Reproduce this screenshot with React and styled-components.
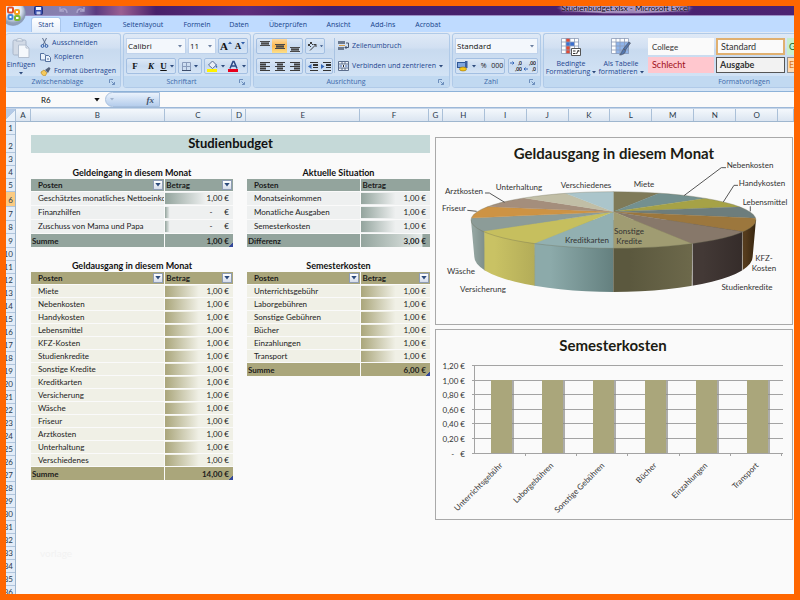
import React from 'react';
import styled, { createGlobalStyle } from 'styled-components';

const GlobalStyle = createGlobalStyle`
* { box-sizing: border-box; }
body {
  margin: 0;
  background: #ff6600;
  font-family: Lato, "Liberation Sans", sans-serif;
  font-size: 8px;
  color: #222;
}
button, input, select {
  font: inherit;
  color: inherit;
  margin: 0;
  padding: 0;
  border: 0;
  background: none;
  min-width: 0;
}
svg { display: block; flex: none; }
`;

const Frame = styled.div`
  height: 100vh;
  border: 6px solid #ff6600;
  background: #fafafa;
  overflow: hidden;
  position: relative;
  display: flex;
  flex-direction: column;
`;

/* ---------- window bar and tabs ---------- */

const TitleBar = styled.header`
  flex: none;
  height: 10px;
  padding-left: 28px;
  display: flex;
  align-items: center;
  overflow: hidden;
  border-bottom: 1px solid #9a8fc4;
  background: linear-gradient(90deg, #7e78a8 0, #8a82b0 70px, #5b3a80 90px, #9a5f92 115px, #47206a 150px, #5d2d7c 240px, #43206a 320px, #4c2372 100%);
`;
const QuickAccess = styled.div`
  display: flex;
  gap: 8px;
  flex: 1;
`;
const WindowTitle = styled.h1`
  margin: -4px 100px 0 0;
  padding: 0 5px;
  font: 8px/12px Lato, sans-serif;
  color: #0c0618;
  text-shadow: 0 0 2px #e6dcf0, 0 0 4px #cbbbe0;
  background: radial-gradient(closest-side, #a892be, #9a83b4 80%, transparent);
  align-self: flex-start;
  white-space: nowrap;
`;
const OfficeButton = styled.button`
  position: absolute;
  left: -6px;
  top: -6px;
  width: 26px;
  height: 26px;
  border-radius: 50%;
  clip-path: inset(6px 0 0 6px);
`;
const Tabs = styled.nav`
  flex: none;
  height: 16px;
  padding-left: 25px;
  display: flex;
  align-items: stretch;
  background: #bfdbff;
`;
const Tab = styled.button`
  width: ${p => p.$width}px;
  font: 7px/14px "Open Sans", sans-serif;
  color: #15428b;
  border-radius: 3px 3px 0 0;
  margin-top: 1px;
  background: ${p => (p.$active ? 'linear-gradient(#fff, #e6effa)' : 'none')};
  border: ${p => (p.$active ? '1px solid #a9c6ec' : '1px solid transparent')};
  border-bottom: 0;
`;

/* ---------- ribbon ---------- */

const Ribbon = styled.div`
  flex: none;
  height: 60px;
  display: flex;
  gap: 2px;
  padding: 1px 0 3px;
  overflow: hidden;
  font: 7px/10px "Open Sans", sans-serif;
  color: #1d4690;
  background: linear-gradient(#e2ebf7, #cfdff1 30%, #c7daf0 55%, #d5e5f6);
  border-bottom: 1px solid #8db2d8;
`;
const Group = styled.section`
  flex: ${p => (p.$width ? `0 0 ${p.$width}px` : '1 0 0')};
  min-width: 0;
  display: flex;
  flex-direction: column;
  border: 1px solid #b0cae8;
  border-left-width: ${p => (p.$first ? 0 : '1px')};
  border-right-width: ${p => (p.$last ? 0 : '1px')};
  border-radius: ${p => (p.$last ? '3px 0 0 3px' : '3px')};
  overflow: hidden;
  background: linear-gradient(#dfe9f6, #d2e0f2 25%, #c8daef 30%, #d6e6f7);
`;
const GroupBody = styled.div`
  flex: 1;
  display: flex;
  gap: ${p => p.$gap || 0}px;
  padding: 4px ${p => (p.$last ? 0 : 2)}px 0 2px;
`;
const GroupLabel = styled.h2`
  margin: 0;
  height: 11px;
  font: inherit;
  color: #3e6aaa;
  display: flex;
  align-items: center;
  padding-right: ${p => (p.$last ? 24 : 5)}px;
  background: #c1d9f1;
`;
const LabelText = styled.span`
  flex: 1;
  text-align: ${p => (p.$last ? 'right' : 'center')};
`;
const Rows = styled.div`
  display: flex;
  flex-direction: column;
  gap: 4px;
  flex: ${p => (p.$grow ? 1 : 'none')};
`;
const Row = styled.div`
  display: flex;
  gap: ${p => p.$gap || 2}px;
  height: 16px;
  align-items: stretch;
`;
const ButtonBox = styled.div`
  display: flex;
  border: 1px solid #a3bfe2;
  border-radius: 2px;
  background: linear-gradient(#dce8f6, #c9dbf0 50%, #d5e4f5);
  flex: ${p => (p.$grow ? 1 : 'none')};
`;
const IconButton = styled.button`
  flex: ${p => (p.$width ? `0 0 ${p.$width}px` : 1)};
  display: flex;
  align-items: center;
  justify-content: center;
  gap: ${p => (p.$tight ? 0 : 3)}px;
  color: #222;
  background: ${p => (p.$active ? 'linear-gradient(#fdd9a0, #fbb850 50%, #fde08a)' : 'none')};
`;
const Glyph = styled.span`
  font: ${p => (p.$italic ? 'italic ' : '')}bold ${p => p.$size || 9}px/12px "Liberation Serif", serif;
  text-decoration: ${p => (p.$underline ? 'underline' : 'none')};
  color: ${p => p.$color || '#111'};
`;
const ComboBox = styled.span`
  position: relative;
  flex: ${p => (p.$width ? `0 0 ${p.$width}px` : 1)};
  display: flex;
  background: #f3f7fc;
  border: 1px solid #c0d3ec;
  color: #111;
`;
const ComboSelect = styled.select`
  appearance: none;
  flex: 1;
  width: 100%;
  padding-left: 1px;
  font-size: 8px;
`;
const ComboCaret = styled.span`
  position: absolute;
  right: 3px;
  top: 6px;
  pointer-events: none;
`;
const PasteButton = styled.button`
  width: 32px;
  display: flex;
  flex-direction: column;
  align-items: center;
  gap: 2px;
  margin-left: -3px;
`;
const CommandList = styled.div`
  display: flex;
  flex-direction: column;
  gap: 4px;
`;
const Command = styled.button`
  display: flex;
  align-items: center;
  gap: 3px;
  height: ${p => p.$height || 10}px;
  white-space: nowrap;
`;
const Divider = styled.span`
  width: 1px;
  margin: 0 3px 3px 1px;
  background: #a9c3e2;
`;
const BigButton = styled.button`
  flex: 0 0 50px;
  display: flex;
  flex-direction: column;
  align-items: center;
  justify-content: flex-start;
  line-height: 8px;
  gap: 4px;
  white-space: nowrap;
`;
const CaptionLine = styled.span`
  display: flex;
  align-items: center;
  justify-content: center;
  gap: 2px;
`;
const Gallery = styled.div`
  flex: 1;
  min-width: 0;
  display: grid;
  grid-template-columns: 66px 69px 67px;
  grid-template-rows: 17px 16px;
  gap: 2px;
  overflow: hidden;
  padding-left: 2px;
`;
const StyleChip = styled.button`
  text-align: left;
  padding-left: ${p => (p.$narrow ? 1 : 3)}px;
  font: ${p => (p.$bold ? 'bold ' : '')}9px/12px Lato, sans-serif;
  font-size: ${p => (p.$small ? 8 : 9)}px;
  color: ${p => p.$color || '#333'};
  background: ${p => p.$bg || '#fafafa'};
  border: ${p => p.$border || '1px solid transparent'};
`;

/* ---------- formula bar ---------- */

const FormulaBar = styled.div`
  flex: none;
  height: 16px;
  display: flex;
  background: #fafafa;
  border-bottom: 1px solid #9db8d8;
`;
const NameBox = styled.input`
  width: 88px;
  padding-left: 35px;
  font-size: 8px;
  color: #111;
`;
const FormulaTools = styled.div`
  width: 55px;
  margin-left: 11px;
  display: flex;
  align-items: center;
  justify-content: space-between;
  padding: 0 5px 0 4px;
  border: 1px solid #a8c0de;
  border-radius: 8px 0 0 8px;
  background: linear-gradient(#eaf2fc, #b5cdec);
  margin-right: -1px;
`;
const FormulaInput = styled.input`
  flex: 1;
  padding: 0 4px;
`;
const NameCaret = styled.span`
  align-self: center;
  width: 0;
`;

/* ---------- sheet ---------- */

const ColumnHeads = styled.div`
  flex: none;
  height: 14px;
  display: grid;
  grid-template-columns: 10px 15fr 134fr 68fr 14fr 114fr 69fr 14fr repeat(8, 42fr) 16fr;
  background: linear-gradient(#f4f8fc, #dbe5f1);
  border-top: 1px solid #c5d5e8;
  border-bottom: 1px solid #9eb6ce;
`;
const ColumnHead = styled.div`
  text-align: center;
  line-height: 12px;
  color: #2b3a4c;
  border-right: 1px solid #aac0d8;
  overflow: hidden;
  &:first-child {
    background: linear-gradient(135deg, #b4cae6 50%, #e9f1fa 50%);
  }
`;
const Sheet = styled.main`
  flex: 1;
  min-height: 0;
  display: flex;
`;
const RowHeads = styled.div`
  flex: 0 0 10px;
  min-width: 0;
  border-right: 1px solid #9eb6ce;
`;
const RowHead = styled.div`
  height: ${p => p.$height}px;
  display: flex;
  justify-content: flex-end;
  align-items: flex-end;
  padding-right: 2px;
  line-height: 12px;
  overflow: hidden;
  color: #2b3a4c;
  border-bottom: 1px solid #b0c5dc;
  background: ${p => (p.$active ? '#fbcb82' : '#e3ecf7')};
`;
const Area = styled.div`
  flex: 1;
  min-width: 0;
  display: grid;
  grid-template-columns: 15fr 399fr 5fr 358fr 1fr;
  align-items: start;
`;
const Budget = styled.div`
  grid-column: 2;
  padding-top: 13px;
`;
const Banner = styled.h2`
  margin: 0 0 13px;
  height: 18px;
  text-align: center;
  font-size: 13px;
  line-height: 17px;
  color: #111;
  background: #c5d9d8;
`;
const Columns = styled.div`
  display: grid;
  grid-template-columns: 202fr 183fr;
  column-gap: 14px;
  row-gap: 12px;
  align-items: start;
`;
const Table = styled.table`
  width: 100%;
  table-layout: fixed;
  border-collapse: separate;
  border-spacing: 0;
`;
const Caption = styled.caption`
  font-size: 9px;
  font-weight: bold;
  line-height: 13px;
  color: #111;
`;
const HeadCell = styled.th`
  width: ${p => p.$width};
  height: 13px;
  padding: 0 0 0 ${p => p.$indent}px;
  line-height: 12px;
  text-align: left;
  color: #1c1c1c;
  background: ${p => p.$accent};
  border-bottom: 1px solid #fafafa;
  border-left: ${p => (p.$indent < 5 ? '1px solid #fafafa' : 0)};
`;
const HeadInner = styled.span`
  display: flex;
  justify-content: space-between;
  align-items: center;
  height: 12px;
`;
const Filter = styled.button`
  width: 10px;
  height: 10px;
  margin-right: 1px;
  display: flex;
  align-items: center;
  justify-content: center;
  border: 1px solid #8f9db5;
  background: linear-gradient(#fff, #d5dcea);
`;
const NameCell = styled.td`
  height: ${p => p.$height}px;
  padding: 0 0 0 7px;
  line-height: 11px;
  overflow: hidden;
  white-space: nowrap;
  background: ${p => p.$bg};
  border-bottom: 1px solid #fafafa;
`;
const AmountCell = styled.td`
  padding: 0;
  line-height: 11px;
  background: ${p => p.$bg};
  border-bottom: 1px solid #fafafa;
  border-left: 1px solid #fafafa;
`;
const Amount = styled.span`
  display: flex;
  justify-content: flex-end;
  gap: 12px;
  padding-right: 4px;
  background: linear-gradient(90deg, ${p => p.$accent}, ${p => p.$bg}) no-repeat 0 0 / ${p => p.$fill}% 100%;
`;
const TotalCell = styled.td`
  height: 13px;
  padding: 0 ${p => (p.$right ? 4 : 0)}px 0 1px;
  line-height: 12px;
  font-weight: bold;
  text-align: ${p => (p.$right ? 'right' : 'left')};
  color: #1c1c1c;
  background: ${p => (p.$fade ? `linear-gradient(90deg, ${p.$accent}, #e4e9e7 88%, ${p.$accent} 90%)` : p.$accent)};
  border-left: ${p => (p.$right ? '1px solid #fafafa' : 0)};
`;
/* total with the resize handle of the table in its corner */
const CornerCell = styled(TotalCell)`
  background: linear-gradient(135deg, transparent 50%, #33479a 50%) no-repeat right bottom / 4px 4px, ${p => p.$accent};
`;
const Watermark = styled.p`
  margin: 66px 0 0 9px;
  font-size: 10px;
  line-height: 14px;
  color: #f2f2f2;
`;
const Charts = styled.div`
  grid-column: 4;
  padding-top: 15px;
  display: flex;
  flex-direction: column;
  gap: 4px;
`;
const ChartCard = styled.figure`
  margin: 0;
  border: 1px solid #a9a9a9;
`;
const ChartSvg = styled.svg`
  width: 100%;
  height: auto;
  font-family: Lato, sans-serif;
`;
const ChartTitle = styled.text`
  font-size: 15px;
  font-weight: bold;
  text-anchor: middle;
  fill: #1c1c14;
`;
const ChartLabel = styled.text`
  font-size: 8px;
  text-anchor: ${p => p.$anchor || 'middle'};
  fill: #333;
`;

/* ---------- data ---------- */

const SAGE = { accent: '#93a49d', bg: '#eef0f0' };
const OLIVE = { accent: '#aaa67b', bg: '#f0f0e6' };

const TABS = [
  ['Start', 30], ['Einfügen', 53], ['Seitenlayout', 58], ['Formeln', 50], ['Daten', 34],
  ['Überprüfen', 64], ['Ansicht', 37], ['Add-Ins', 52], ['Acrobat', 38],
];
const COLS = ['', ...'ABCDEFGHIJKLMNO', ''];
const ROW_HEIGHTS = { 2: 18, 6: 15, 7: 14, 9: 14 };

const INCOME = [
  ['Geschätztes monatliches Nettoeinkommen', '1,00 €', 60],
  ['Finanzhilfen', null, 7],
  ['Zuschuss von Mama und Papa', null, 7],
];
const SITUATION = ['Monatseinkommen', 'Monatliche Ausgaben', 'Semesterkosten'].map(n => [n, '1,00 €', 50]);
const EXPENSES = [
  'Miete', 'Nebenkosten', 'Handykosten', 'Lebensmittel', 'KFZ-Kosten', 'Studienkredite', 'Sonstige Kredite',
  'Kreditkarten', 'Versicherung', 'Wäsche', 'Friseur', 'Arztkosten', 'Unterhaltung', 'Verschiedenes',
].map(n => [n, '1,00 €', 50]);
const SEMESTER = [
  'Unterrichtsgebühr', 'Laborgebühren', 'Sonstige Gebühren', 'Bücher', 'Einzahlungen', 'Transport',
].map(n => [n, '1,00 €', 50]);

// rim points of the pie, clockwise from the top
const RIM = [
  [550, 184, '#7f7a58'], [687, 189, '#73908f'], [823, 205, '#a6a246'], [928, 230, '#6d7d7c'],
  [977, 264, '#9c773d'], [938, 304, '#87786a'], [788, 341, '#a09c72'], [550, 354, '#92b0b1'],
  [314, 339, '#c6bf5e'], [163, 302, '#8c9c98'], [124, 263, '#cd9344'], [180, 229, '#a48e7c'],
  [284, 203, '#c1bea6'], [408, 189, '#abc5cb'],
];
const SIDES = [
  ['waesche', 123, 163, 168, '#93a4a0', '#7b8c88'],
  ['versicherung', 163, 314, 316, '#c9c264', '#b3ac58'],
  ['kreditkarten', 314, 550, 550, '#8caaaa', '#64807f'],
  ['kredite', 550, 788, 785, '#5b583e', '#6d694b'],
  ['studium', 788, 938, 935, '#433936', '#352c2a'],
  ['kfz', 938, 980, 975, '#553b1c', '#33230f'],
];
const PIE_LABELS = [
  ['Miete', 208, 49], ['Verschiedenes', 150, 50], ['Unterhaltung', 83, 52], ['Arztkosten', 28, 56],
  ['Friseur', 18, 73], ['Wäsche', 25, 136], ['Versicherung', 47, 154], ['Kreditkarten', 151, 105],
  ['Sonstige', 193, 96], ['Kredite', 193, 106], ['Nebenkosten', 314, 30], ['Handykosten', 326, 48],
  ['Lebensmittel', 329, 67], ['KFZ-', 328, 123], ['Kosten', 328, 133], ['Studienkredite', 311, 152],
];

/* ---------- icons ---------- */

const Caret = ({ color = '#2c4a7c', size = 4 }) => (
  <svg width={size} height={size / 2 + 1} viewBox="0 0 4 3"><path d="M0 0h4L2 2.6z" fill={color} /></svg>
);

const SizeMark = ({ down }) => (
  <svg width="4" height="10" viewBox="0 0 4 10"><path d={down ? 'M0 1h4L2 3.5z' : 'M0 3h4L2 .5z'} fill="#2f5da8" /></svg>
);

const Launcher = () => (
  <svg width="6" height="6" viewBox="0 0 6 6" fill="none" stroke="#6d8fbd">
    <path d="M.5 4V.5H4M2.5 2.5l3 3M5.5 3v2.5H3" />
  </svg>
);

const OfficeLogo = () => (
  <svg width="26" height="26" viewBox="0 0 26 26">
    <defs>
      <radialGradient id="orb" cx=".5" cy=".4">
        <stop offset="0" stopColor="#fff" /><stop offset=".65" stopColor="#dde5f0" /><stop offset="1" stopColor="#8f9fb8" />
      </radialGradient>
    </defs>
    <circle cx="13" cy="13" r="12.5" fill="url(#orb)" stroke="#8795b0" strokeWidth=".6" />
    <g fill="#fff" strokeWidth="2">
      <rect x="8" y="7.5" width="5" height="5" rx="1" stroke="#e2502a" />
      <rect x="15" y="10" width="4" height="4" rx="1" stroke="#f5a01c" />
      <rect x="8.5" y="15" width="4" height="4" rx="1" stroke="#3f86d6" />
      <rect x="15" y="16" width="4.5" height="4" rx="1" stroke="#7cb82f" />
    </g>
  </svg>
);

const SaveIcon = () => (
  <svg width="9" height="9" viewBox="0 0 9 9">
    <rect x=".5" y=".5" width="8" height="8" rx="1" fill="#3b4fae" stroke="#22307a" />
    <rect x="2" y="1" width="5" height="3" fill="#eef2ff" /><rect x="2.5" y="5.5" width="4" height="3" fill="#c8d0ee" />
  </svg>
);

const ArrowIcon = ({ flip }) => (
  <svg width="9" height="9" viewBox="0 0 9 9" fill="none" stroke="#aca5cc" strokeWidth="1.3">
    <path d={flip ? 'M1 7c0-5 5-5 7-2M8 1v4H4' : 'M8 7c0-5-5-5-7-2M1 1v4h4'} />
  </svg>
);

const PasteIcon = () => (
  <svg width="18" height="20" viewBox="0 0 18 20">
    <rect x="1" y="2" width="13" height="15" rx="1.5" fill="#d2dae6" stroke="#a9b6c9" />
    <path d="M4 3c0-1.5 2-2.500 3.500-2.500S11 1.500 11 3z" fill="#eef2f7" stroke="#a9b6c9" />
    <path d="M6.500 7h7.500l3 3v9.500H6.500z" fill="#f5f8fc" stroke="#b3bfd0" />
    <path d="M14 7v3h3" fill="none" stroke="#b3bfd0" />
  </svg>
);

const ScissorsIcon = () => (
  <svg width="9" height="10" viewBox="0 0 9 10" fill="none" stroke="#2f5da8">
    <path d="M2.500 0l3.500 7M6.500 0L3 7" stroke="#5b6d8c" />
    <circle cx="2.500" cy="8" r="1.400" /><circle cx="6.500" cy="8" r="1.400" />
  </svg>
);

const CopyIcon = () => (
  <svg width="11" height="9" viewBox="0 0 11 9" fill="#e9f1fb" stroke="#54719f">
    <path d="M.5.5h3.500l2 2v4.500H.5z" /><path d="M5.500 2.500h3l2 2v4h-5z" /><path d="M7 6h2" />
  </svg>
);

const BrushIcon = () => (
  <svg width="11" height="9" viewBox="0 0 11 9">
    <path d="M1 5l3-2 3 3-2 3c-2 0-4-2-4-4z" fill="#f5c95b" stroke="#b58a2a" strokeWidth=".7" />
    <path d="M5 3l4-3 1.500 1.500L8 6z" fill="#54617a" />
  </svg>
);

const LinesIcon = ({ mode }) => {
  const short = { left: 0, center: 2, right: 4 }[mode];
  if (short === undefined) {
    const top = { top: 0, middle: 3, bottom: 6 }[mode];
    return (
      <svg width="10" height="11" viewBox="0 0 10 11" fill="#4a4a4a">
        <path d={`M0 ${top}h10v1H0zM1 ${top + 2}h8v1H1zM0 ${top + 4}h10v1H0z`} />
        <path d={`M1 ${top + 1}h8v3H1z`} opacity=".65" />
      </svg>
    );
  }
  return (
    <svg width="10" height="9" viewBox="0 0 10 9" fill="#3c3c3c">
      <path d={`M0 0h10v1H0zM${short} 2h6v1h-6zM0 4h10v1H0zM${short} 6h6v1h-6zM0 8h10v1H0z`} />
      <path d={`M${short} 0h6v9h-6z`} opacity=".5" />
    </svg>
  );
};

const IndentIcon = ({ back }) => (
  <svg width="10" height="9" viewBox="0 0 10 9">
    <path d="M2 0h8v1H2zM5 2h5v2H5zM5 5h5v1H5zM2 8h8v1H2z" fill="#333" />
    <path d={back ? 'M3.500 2L0 4.500 3.500 7z' : 'M0 2l3.500 2.500L0 7z'} fill="#3467b8" />
  </svg>
);

const OrientationIcon = () => (
  <svg width="10" height="10" viewBox="0 0 10 10" fill="none" stroke="#3c3c3c">
    <path d="M3 9.500l6-6M9 6V3.500H6.500M1 3l3 3M3 1l3 3M1 5l4-4" />
  </svg>
);

const BorderIcon = () => (
  <svg width="9" height="9" viewBox="0 0 9 9" fill="none" stroke="#8a9cbc">
    <path d="M.5.5h8v8h-8zM4.500 0v9M0 4.500h9" /><path d="M0 8.500h9" stroke="#3c4c6a" />
  </svg>
);

const FillIcon = () => (
  <svg width="11" height="12" viewBox="0 0 11 12">
    <path d="M1.500 5l4-4 4 4-4 3.500z" fill="#e8eef8" stroke="#5a6f96" /><path d="M8.500 4l2 3-1.500 1z" fill="#3b6dc0" />
    <path d="M0 9h10v3H0z" fill="#fff200" />
  </svg>
);

const FontColorIcon = () => (
  <svg width="11" height="12" viewBox="0 0 11 12">
    <path d="M2 8.500l3-7h1l3 7M3.500 6h4" fill="none" stroke="#2b4a86" strokeWidth="1.500" />
    <path d="M0 9h10v3H0z" fill="#e8001c" />
  </svg>
);

const WrapIcon = () => (
  <svg width="11" height="10" viewBox="0 0 11 10">
    <path d="M0 0h7v3H0zM0 6h6v3H0z" fill="#6c7a90" /><path d="M1 4h6v1H1z" fill="#d9a04a" />
    <path d="M8 2h2.500v4.500H7M8.500 5L7 6.500 8.500 8" fill="none" stroke="#44546e" />
  </svg>
);

const MergeIcon = () => (
  <svg width="11" height="10" viewBox="0 0 11 10" fill="none" stroke="#5b6d8c">
    <path d="M.5.5h10v9H.5zM.5 3h10M.5 7h10M4 .5V3M7 .5V3M4 7v2.500M7 7v2.500" fill="#f2f6fb" />
    <path d="M1.500 5h2.500M9.500 5H7" stroke="#2c5cb0" /><path d="M5 4h1v2H5z" fill="#222" stroke="none" />
  </svg>
);

const CurrencyIcon = () => (
  <svg width="12" height="11" viewBox="0 0 12 11">
    <rect x=".5" y="1.500" width="9" height="5" fill="#7fa6dd" stroke="#2f5796" />
    <path d="M8 0h2.500v7H8z" fill="#3d5f9d" />
    <ellipse cx="6" cy="8" rx="3.500" ry="2" fill="#f5c518" stroke="#9a7410" strokeWidth=".6" />
  </svg>
);

const DecimalIcon = ({ less }) => (
  <svg width="12" height="14" viewBox="0 0 12 14" fontFamily="Lato" fontSize="5" fontWeight="bold" fill="#222">
    <path d={less ? 'M0 10h4M1.500 8.500L0 10l1.500 1.500' : 'M0 4h4M2.500 2.500L4 4 2.500 5.500'} stroke="#3467b8" fill="none" />
    <text x="12" y="6" textAnchor="end">{less ? ',00' : ',0'}</text>
    <text x="12" y="12" textAnchor="end">{less ? ',0' : ',00'}</text>
  </svg>
);

const GridIcon = ({ table }) => (
  <svg width="20" height="18" viewBox="0 0 20 18">
    <path d="M.5.5h17v15H.5z" fill="#fff" />
    {table
      ? <path d="M5 4h13v12H5z" fill="#8fb4ea" />
      : <path d="M5 0h4v4H5zM5 8h4v8H5z" fill="#e34a34" />}
    {!table && <path d="M5 4h8v4H5z" fill="#3a6fd0" />}
    <path d="M.5.5h17v15H.5zM5 0v16M9 0v16M13.500 0v16M0 4h18M0 8h18M0 12h18" fill="none" stroke="#8d9cb8" strokeWidth=".8" />
    {table
      ? <path d="M19.500 5l-5 7-2-1.500L18 4zM12.500 11l2 1.500c0 3-3 4.500-6 4.500 2-1.500 2-4 4-6z" fill="#5477ad" stroke="#4b4b55" strokeWidth=".6" />
      : <g><path d="M10.500 10.500h9v7h-9z" fill="#fff" stroke="#555" /><path d="M12 13h2.500M12 15.500h2.500M17.500 12l-2 4M16.500 13h2" stroke="#333" /></g>}
  </svg>
);

/* ---------- parts ---------- */

const RibbonGroup = ({ label, width, gap, first, last, children }) => (
  <Group $width={width} $first={first} $last={last}>
    <GroupBody $gap={gap} $last={last}>{children}</GroupBody>
    <GroupLabel $last={last}><LabelText $last={last}>{label}</LabelText>{!last && <Launcher />}</GroupLabel>
  </Group>
);

const Combo = ({ label, value, width }) => (
  <ComboBox $width={width}>
    <ComboSelect aria-label={label} defaultValue={value}><option>{value}</option></ComboSelect>
    <ComboCaret><Caret color="#6b7f9f" /></ComboCaret>
  </ComboBox>
);

const BudgetTable = ({ title, theme, rows, total, widths, heights, filters, fadeTotal }) => {
  const Sum = fadeTotal ? TotalCell : CornerCell;
  return <Table>
    <Caption>{title}</Caption>
    <thead>
      <tr>
        {['Posten', 'Betrag'].map((name, i) => (
          <HeadCell key={name} $accent={theme.accent} $width={widths[i]} $indent={i ? 1 : 7}>
            <HeadInner>
              {name}
              {filters && <Filter aria-label={`${name} filtern`}><Caret size={6} /></Filter>}
            </HeadInner>
          </HeadCell>
        ))}
      </tr>
    </thead>
    <tbody>
      {rows.map(([name, amount, fill], i) => (
        <tr key={name}>
          <NameCell $bg={theme.bg} $height={heights ? heights[i] : 13}>{name}</NameCell>
          <AmountCell $bg={theme.bg}>
            <Amount $accent={theme.accent} $bg={theme.bg} $fill={fill}>
              {amount || <><span>-</span><span>€</span></>}
            </Amount>
          </AmountCell>
        </tr>
      ))}
    </tbody>
    <tfoot>
      <tr>
        <TotalCell $accent={theme.accent}>{total[0]}</TotalCell>
        <Sum $accent={theme.accent} $right $fade={fadeTotal}>{total[1]}</Sum>
      </tr>
    </tfoot>
  </Table>
};

const PieChart = () => (
  <ChartCard>
    <ChartSvg viewBox="0 0 356 186" role="img" aria-label="Geldausgang in diesem Monat">
      <defs>
        <clipPath id="pieTop"><ellipse cx="550.5" cy="269" rx="427.5" ry="85" /></clipPath>
        <clipPath id="pieSide"><path d="M123 269L133 380A417 105 0 0 0 968 380L978 269z" /></clipPath>
        {SIDES.map(([id, , , , from, to]) => (
          <linearGradient key={id} id={id}><stop offset=".2" stopColor={from} /><stop offset="1" stopColor={to} /></linearGradient>
        ))}
      </defs>
      <ChartTitle x="178" y="21">Geldausgang in diesem Monat</ChartTitle>
      <g transform="scale(.3333) translate(-18 -23)">
        <g clipPath="url(#pieSide)">
          {SIDES.map(([id, left, right, foot]) => (
            <path key={id} d={`M${left} 260H${right}L${foot} 500H${left}z`} fill={`url(#${id})`} stroke="#8a8a78" strokeOpacity=".4" />
          ))}
        </g>
        <g clipPath="url(#pieTop)">
          {RIM.map(([x, y, fill], i) => {
            const [nx, ny] = RIM[(i + 1) % RIM.length];
            const out = (v, c) => c + (v - c) * 1.2;
            return <path key={fill} d={`M550 244L${out(x, 550)} ${out(y, 244)}L${out(nx, 550)} ${out(ny, 244)}z`} fill={fill} stroke={fill} />;
          })}
        </g>
        <ellipse cx="550.5" cy="269" rx="427.5" ry="85" fill="none" stroke="#6b6b55" strokeOpacity=".5" strokeWidth="2" />
        <path
          d="M762 196L874 112H888M880 215L912 165H924M961 243V228M165 188H178L224 216M112 240L140 243"
          fill="none" stroke="#555" strokeWidth="3"
        />
      </g>
      {PIE_LABELS.map(([text, x, y]) => <ChartLabel key={text} x={x} y={y}>{text}</ChartLabel>)}
    </ChartSvg>
  </ChartCard>
);

const ColumnChart = () => (
  <ChartCard>
    <ChartSvg viewBox="0 0 356 189" role="img" aria-label="Semesterkosten">
      <ChartTitle x="177" y="21">Semesterkosten</ChartTitle>
      {['1,20 €', '1,00 €', '0,80 €', '0,60 €', '0,40 €', '0,20 €', '-   €'].map((text, i) => {
        const y = 35.5 + Math.round(i * 14.6);
        return (
          <g key={text}>
            <path d={`M36 ${y}H347`} stroke="#a3a3a3" />
            <ChartLabel x="29" y={y + 3} $anchor="end" xmlSpace="preserve">{text}</ChartLabel>
          </g>
        );
      })}
      <path d="M38.5 35V123" stroke="#a3a3a3" />
      {SEMESTER.map(([name], i) => {
        const x = 55 + Math.round(i * 51.2);
        return (
          <g key={name}>
            <rect x={x + 2} y="51" width="21" height="72" fill="#8a8a88" opacity=".7" />
            <rect x={x} y="50" width="21" height="73" fill="#aaa67b" />
            <path d={`M${x + 34.5} 123v3`} stroke="#a3a3a3" />
            <ChartLabel $anchor="end" transform={`translate(${x + 12} 136) rotate(-45)`}>{name}</ChartLabel>
          </g>
        );
      })}
    </ChartSvg>
  </ChartCard>
);

const App = () => {
  return <Frame>
    <GlobalStyle />
    <TitleBar>
      <QuickAccess><SaveIcon /><i /><ArrowIcon /><ArrowIcon flip /></QuickAccess>
      <WindowTitle>Studienbudget.xlsx - Microsoft Excel</WindowTitle>
    </TitleBar>
    <Tabs>
      {TABS.map(([name, width], i) => <Tab key={name} $width={width} $active={i === 0}>{name}</Tab>)}
    </Tabs>
    <OfficeButton aria-label="Office"><OfficeLogo /></OfficeButton>

    <Ribbon>
      <RibbonGroup label="Zwischenablage" width={115} gap={3} first>
        <PasteButton><PasteIcon /><span>Einfügen</span><Caret /></PasteButton>
        <CommandList>
          <Command><ScissorsIcon />Ausschneiden</Command>
          <Command><CopyIcon />Kopieren</Command>
          <Command><BrushIcon />Format übertragen</Command>
        </CommandList>
      </RibbonGroup>

      <RibbonGroup label="Schriftart" width={128}>
        <Rows $grow>
          <Row>
            <Combo label="Schriftart" value="Calibri" />
            <Combo label="Schriftgrad" value="11" width={28} />
            <ButtonBox>
              <IconButton $width={14} $tight><Glyph $size={11}>A</Glyph><SizeMark /></IconButton>
              <IconButton $width={14} $tight><Glyph $size={9}>A</Glyph><SizeMark down /></IconButton>
            </ButtonBox>
          </Row>
          <Row>
            <ButtonBox $grow>
              <IconButton><Glyph>F</Glyph></IconButton>
              <IconButton><Glyph $italic>K</Glyph></IconButton>
              <IconButton><Glyph $underline>U</Glyph><Caret /></IconButton>
            </ButtonBox>
            <ButtonBox><IconButton $width={22} aria-label="Rahmen"><BorderIcon /><Caret /></IconButton></ButtonBox>
            <ButtonBox>
              <IconButton $width={21} aria-label="Füllfarbe"><FillIcon /><Caret /></IconButton>
              <IconButton $width={21} aria-label="Schriftfarbe"><FontColorIcon /><Caret /></IconButton>
            </ButtonBox>
          </Row>
        </Rows>
      </RibbonGroup>

      <RibbonGroup label="Ausrichtung" width={197}>
        <Rows>
          <Row>
            <ButtonBox>
              {['top', 'middle', 'bottom'].map(m => (
                <IconButton key={m} $width={15} $active={m === 'middle'} aria-label={m}><LinesIcon mode={m} /></IconButton>
              ))}
            </ButtonBox>
            <ButtonBox><IconButton $width={18} aria-label="Orientierung"><OrientationIcon /><Caret size={3} /></IconButton></ButtonBox>
          </Row>
          <Row>
            <ButtonBox>
              {['left', 'center', 'right'].map(m => (
                <IconButton key={m} $width={15} aria-label={m}><LinesIcon mode={m} /></IconButton>
              ))}
            </ButtonBox>
            <ButtonBox>
              <IconButton $width={13} aria-label="Einzug verkleinern"><IndentIcon back /></IconButton>
              <IconButton $width={13} aria-label="Einzug vergrößern"><IndentIcon /></IconButton>
            </ButtonBox>
          </Row>
        </Rows>
        <Divider />
        <CommandList>
          <Command $height={16}><WrapIcon />Zeilenumbruch</Command>
          <Command $height={16}><MergeIcon />Verbinden und zentrieren<Caret /></Command>
        </CommandList>
      </RibbonGroup>

      <RibbonGroup label="Zahl" width={89}>
        <Rows $grow>
          <Row><Combo label="Zahlenformat" value="Standard" /></Row>
          <Row $gap={3}>
            <ButtonBox $grow>
              <IconButton $width={21} aria-label="Währung"><CurrencyIcon /><Caret /></IconButton>
              <IconButton>%</IconButton>
              <IconButton>000</IconButton>
            </ButtonBox>
            <ButtonBox>
              <IconButton $width={14} aria-label="Dezimalstelle hinzufügen"><DecimalIcon /></IconButton>
              <IconButton $width={14} aria-label="Dezimalstelle löschen"><DecimalIcon less /></IconButton>
            </ButtonBox>
          </Row>
        </Rows>
      </RibbonGroup>

      <RibbonGroup label="Formatvorlagen" last>
        <BigButton>
          <GridIcon />
          <span>Bedingte<CaptionLine>Formatierung <Caret /></CaptionLine></span>
        </BigButton>
        <BigButton>
          <GridIcon table />
          <span>Als Tabelle<CaptionLine>formatieren <Caret /></CaptionLine></span>
        </BigButton>
        <Gallery>
          <StyleChip $small>College</StyleChip>
          <StyleChip $border="2px solid #e0b070">Standard</StyleChip>
          <StyleChip $narrow $bg="#c6efce" $color="#1f6b25">Gut</StyleChip>
          <StyleChip $bg="#ffc7ce" $color="#a01018">Schlecht</StyleChip>
          <StyleChip $bold $bg="#f2f2f2" $border="1px solid #555">Ausgabe</StyleChip>
          <StyleChip $narrow $bg="#ffd9b0" $color="#d9771a" $border="1px solid #8f8f8f">Eingabe</StyleChip>
        </Gallery>
      </RibbonGroup>
    </Ribbon>

    <FormulaBar>
      <NameBox aria-label="Namenfeld" defaultValue="R6" />
      <NameCaret><Caret color="#111" size={6} /></NameCaret>
      <FormulaTools><Caret color="#9fb2cc" /><Glyph $italic $color="#44546e">fx</Glyph></FormulaTools>
      <FormulaInput aria-label="Bearbeitungsleiste" />
    </FormulaBar>

    <ColumnHeads>{COLS.map((c, i) => <ColumnHead key={i}>{c}</ColumnHead>)}</ColumnHeads>
    <Sheet>
      <RowHeads>
        {Array.from({ length: 36 }, (_, i) => i + 1).map(n => (
          <RowHead key={n} $height={ROW_HEIGHTS[n] || 13} $active={n === 6}>{n}</RowHead>
        ))}
      </RowHeads>
      <Area>
        <Budget>
          <Banner>Studienbudget</Banner>
          <Columns>
            <BudgetTable
              title="Geldeingang in diesem Monat" theme={SAGE} rows={INCOME} total={['Summe', '1,00 €']}
              widths={['66%', '34%']} heights={[14, 14, 14]} filters
            />
            <BudgetTable
              title="Aktuelle Situation" theme={SAGE} rows={SITUATION} total={['Differenz', '3,00 €']}
              widths={['62%', '38%']} heights={[14, 14, 14]} fadeTotal
            />
            <BudgetTable
              title="Geldausgang in diesem Monat" theme={OLIVE} rows={EXPENSES} total={['Summe', '14,00 €']}
              widths={['66%', '34%']} filters
            />
            <BudgetTable
              title="Semesterkosten" theme={OLIVE} rows={SEMESTER} total={['Summe', '6,00 €']}
              widths={['62%', '38%']} filters
            />
          </Columns>
          <Watermark>vorlage</Watermark>
        </Budget>
        <Charts>
          <PieChart />
          <ColumnChart />
        </Charts>
      </Area>
    </Sheet>
  </Frame>
};

export default App;
